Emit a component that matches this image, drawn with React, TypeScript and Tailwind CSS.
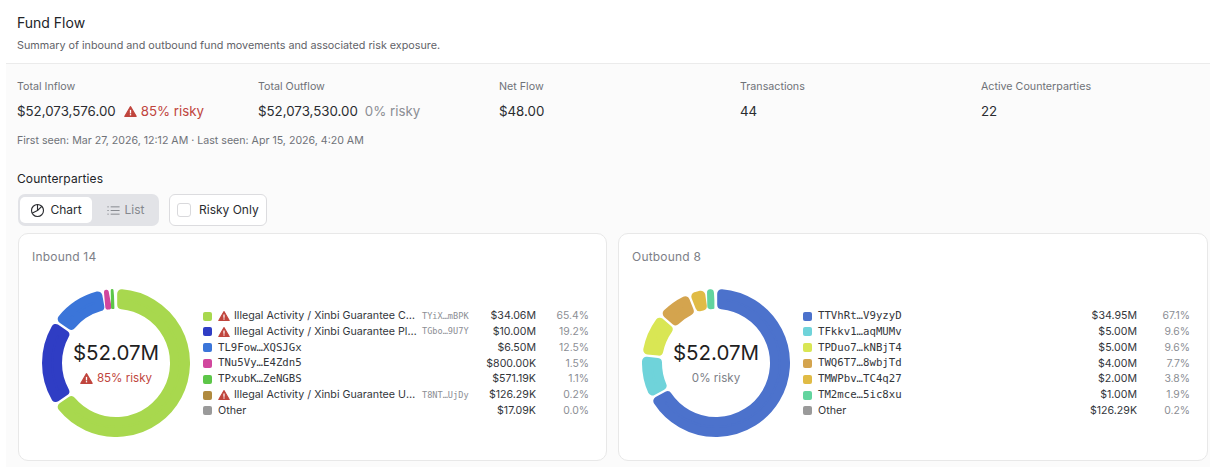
import React from "react";

const SANS = "font-['Inter','Noto_Sans',sans-serif]";
const MONO = "font-['DejaVu_Sans_Mono',monospace]";

function Warn({ size = 12, className = "" }: { size?: number; className?: string }) {
  return (
    <svg width={size} height={size} viewBox="0 0 16 16" className={className}>
      <path d="M8 2 L15 14 H1 Z" fill="#c0453d" stroke="#c0453d" strokeWidth="1.4" strokeLinejoin="round" />
      <rect x="7.2" y="6" width="1.6" height="4.4" fill="#fff" />
      <rect x="7.2" y="11.2" width="1.6" height="1.6" fill="#fff" />
    </svg>
  );
}

type Seg = { pct: number; color: string };

function arcPath(a0: number, a1: number, cx: number, cy: number, ri: number, ro: number, s: number, gap: number) {
  const rIn = ri + s / 2;
  const rOut = ro - s / 2;
  const pt = (r: number, a: number) => {
    const t = ((a - 90) * Math.PI) / 180;
    return `${(cx + r * Math.cos(t)).toFixed(2)} ${(cy + r * Math.sin(t)).toFixed(2)}`;
  };
  const ins = (r: number) => (((gap / 2 + s / 2) / r) * 180) / Math.PI;
  const large = a1 - a0 > 180 ? 1 : 0;
  return `M${pt(rOut, a0 + ins(rOut))} A${rOut} ${rOut} 0 ${large} 1 ${pt(rOut, a1 - ins(rOut))} L${pt(rIn, a1 - ins(rIn))} A${rIn} ${rIn} 0 ${large} 0 ${pt(rIn, a0 + ins(rIn))} Z`;
}

function Donut({ segs, risky }: { segs: Seg[]; risky: boolean }) {
  let acc = 0;
  return (
    <div className="relative w-[148px] h-[148px] shrink-0">
      <svg width="148" height="148" viewBox="0 0 148 148">
        {segs.map((g, i) => {
          const a0 = (acc / 100) * 360;
          acc += g.pct;
          const a1 = (acc / 100) * 360;
          const w = ((a1 - a0) * Math.PI * 74) / 180;
          const s = Math.max(0.4, Math.min(9, w - 2.4));
          return (
            <path
              key={i}
              d={arcPath(a0, a1, 74, 74, 54, 74, s, 2.4)}
              fill={g.color}
              stroke={g.color}
              strokeWidth={s}
              strokeLinejoin="round"
            />
          );
        })}
      </svg>
      <div className="absolute inset-0 flex flex-col items-center justify-center">
        <div className="text-[20.5px] leading-[28px] text-[#1f1f1f]">$52.07M</div>
        {risky ? (
          <div className="flex items-center gap-[4px] text-[11.6px] leading-[18px] text-[#c0453d] mt-[2px]">
            <Warn size={13} />
            85% risky
          </div>
        ) : (
          <div className="text-[11.6px] leading-[18px] text-[#7d8087] mt-[2px]">0% risky</div>
        )}
      </div>
    </div>
  );
}

type Row = { color: string; name: string; mono: boolean; risk?: boolean; addr?: string; amt: string; pct: string };

function Legend({ rows }: { rows: Row[] }) {
  return (
    <div className="flex-1 min-w-0 flex flex-col pt-[1px]">
      {rows.map((r) => (
        <div key={r.color} className="flex items-center h-[15.8px] text-[10.7px]">
          <span className="w-[9px] h-[9px] rounded-[2px] shrink-0" style={{ backgroundColor: r.color }} />
          <div className="flex items-center flex-1 min-w-0 ml-[6px]">
            {r.risk && <Warn size={12} className="shrink-0 mr-[4px]" />}
            {r.risk ? (
              <>
                <span className="w-[185px] shrink-0 truncate text-[#33363b]">{r.name}</span>
                <span className={`ml-[3px] ${MONO} text-[8.6px] text-[#8b8e94]`}>{r.addr}</span>
              </>
            ) : (
              <span className={r.mono ? `${MONO} text-[10.7px] text-[#33363b]` : "text-[#33363b]"}>{r.name}</span>
            )}
          </div>
          <span className="w-[60px] text-right text-[10.6px] text-[#33363b]">{r.amt}</span>
          <span className="w-[53px] text-right text-[10.4px] text-[#8b8e94]">{r.pct}</span>
        </div>
      ))}
    </div>
  );
}

function Card({ title, segs, rows, risky }: { title: string; segs: Seg[]; rows: Row[]; risky: boolean }) {
  return (
    <div className="rounded-[10px] border border-[#e8e8e8] bg-white h-[228px] pl-[13px] pr-[17px] pt-[15px]">
      <div className="text-[12px] leading-[16px] text-[#7d8087] tracking-[0.2px]">{title}</div>
      <div className="flex items-center mt-[24px] ml-[10px] gap-[13px]">
        <Donut segs={segs} risky={risky} />
        <Legend rows={rows} />
      </div>
    </div>
  );
}

function Stat({ label, children }: { label: string; children: React.ReactNode }) {
  return (
    <div>
      <div className="text-[10.7px] leading-[16px] text-[#6f7278]">{label}</div>
      <div className="flex items-center text-[13.3px] leading-[20px] text-[#2a2c30] mt-[6px] whitespace-nowrap">{children}</div>
    </div>
  );
}

const inSegs: Seg[] = [
  { pct: 65.4, color: "#a8d84e" },
  { pct: 19.2, color: "#2f3dc4" },
  { pct: 12.5, color: "#3b75d9" },
  { pct: 1.5, color: "#d1479e" },
  { pct: 1.1, color: "#5dc648" },
  { pct: 0.3, color: "#ffffff" },
];
const outSegs: Seg[] = [
  { pct: 67.1, color: "#4c72cc" },
  { pct: 9.6, color: "#6fd3da" },
  { pct: 9.6, color: "#d9e654" },
  { pct: 7.7, color: "#d4a44e" },
  { pct: 3.8, color: "#e0bb45" },
  { pct: 1.9, color: "#62d49e" },
  { pct: 0.3, color: "#ffffff" },
];
const inRows: Row[] = [
  { color: "#a8d84e", name: "Illegal Activity / Xinbi Guarantee Customer", mono: false, risk: true, addr: "TYiX…mBPK", amt: "$34.06M", pct: "65.4%" },
  { color: "#2f3dc4", name: "Illegal Activity / Xinbi Guarantee Platform", mono: false, risk: true, addr: "TGbo…9U7Y", amt: "$10.00M", pct: "19.2%" },
  { color: "#3b75d9", name: "TL9Fow…XQSJGx", mono: true, amt: "$6.50M", pct: "12.5%" },
  { color: "#d1479e", name: "TNu5Vy…E4Zdn5", mono: true, amt: "$800.00K", pct: "1.5%" },
  { color: "#5dc648", name: "TPxubK…ZeNGBS", mono: true, amt: "$571.19K", pct: "1.1%" },
  { color: "#b08a3e", name: "Illegal Activity / Xinbi Guarantee Unknown", mono: false, risk: true, addr: "T8NT…UjDy", amt: "$126.29K", pct: "0.2%" },
  { color: "#9a9a9a", name: "Other", mono: false, amt: "$17.09K", pct: "0.0%" },
];
const outRows: Row[] = [
  { color: "#4c72cc", name: "TTVhRt…V9yzyD", mono: true, amt: "$34.95M", pct: "67.1%" },
  { color: "#6fd3da", name: "TFkkv1…aqMUMv", mono: true, amt: "$5.00M", pct: "9.6%" },
  { color: "#d9e654", name: "TPDuo7…kNBjT4", mono: true, amt: "$5.00M", pct: "9.6%" },
  { color: "#d4a44e", name: "TWQ6T7…8wbjTd", mono: true, amt: "$4.00M", pct: "7.7%" },
  { color: "#e0bb45", name: "TMWPbv…TC4q27", mono: true, amt: "$2.00M", pct: "3.8%" },
  { color: "#62d49e", name: "TM2mce…5ic8xu", mono: true, amt: "$1.00M", pct: "1.9%" },
  { color: "#9a9a9a", name: "Other", mono: false, amt: "$126.29K", pct: "0.2%" },
];

export default function App() {
  return (
    <div className={`w-[1220px] h-[476px] overflow-hidden bg-white pl-[6px] pr-[10px] ${SANS}`}>
      <div className="h-[64px] border-b border-[#ebebeb] pl-[11px] pt-[13px]">
        <div className="text-[14px] leading-[20px] text-[#222428]">Fund Flow</div>
        <div className="text-[10.77px] leading-[16px] text-[#5f6268] mt-[5px]">Summary of inbound and outbound fund movements and associated risk exposure.</div>
      </div>
      <div className="h-[403px] bg-[#fbfbfb] pl-[11px] pt-[15px]">
        <div className="grid grid-cols-[241px_241px_241px_241px_1fr]">
          <Stat label="Total Inflow">
            $52,073,576.00
            <span className="flex items-center text-[#c0453d] ml-[8px]">
              <Warn size={13} className="mr-[4px]" />
              85% risky
            </span>
          </Stat>
          <Stat label="Total Outflow">
            $52,073,530.00<span className="text-[#8b8e94] ml-[7px]">0% risky</span>
          </Stat>
          <Stat label="Net Flow">$48.00</Stat>
          <Stat label="Transactions">44</Stat>
          <Stat label="Active Counterparties">22</Stat>
        </div>
        <div className="text-[10.62px] leading-[16px] text-[#6f7278] mt-[12px]">First seen: Mar 27, 2026, 12:12 AM · Last seen: Apr 15, 2026, 4:20 AM</div>
        <div className="text-[12px] leading-[16px] text-[#222428] mt-[22px] tracking-[0.1px]">Counterparties</div>
        <div className="flex items-center gap-[10px] mt-[7px] ml-[1px]">
          <div className="flex h-[32px] w-[141px] rounded-[7px] bg-[#e2e3e7] py-[3px] pl-[2px] pr-[3px]">
            <div className="w-[72px] rounded-[5px] bg-white flex items-center justify-center gap-[5px] text-[12px] text-[#2a2c30]">
              <svg width="15" height="15" viewBox="0 0 16 16" fill="none" stroke="#2a2c30" strokeWidth="1.2" strokeLinecap="round" strokeLinejoin="round">
                <circle cx="8" cy="8" r="6.4" />
                <path d="M2.6 10.6 L8 8 L12.6 3.6 M8 8 L8 1.8" />
              </svg>
              Chart
            </div>
            <div className="flex-1 flex items-center justify-center gap-[5px] pl-[3px] text-[12px] text-[#85888e]">
              <svg width="13" height="13" viewBox="0 0 16 16" fill="none" stroke="#85888e" strokeWidth="1.2" strokeLinecap="round">
                <path d="M5 3.5H15M5 8H15M5 12.5H15M1 3.5H1.6M1 8H1.6M1 12.5H1.6" />
              </svg>
              List
            </div>
          </div>
          <div className="flex items-center h-[32px] w-[98px] rounded-[6px] border border-[#dcdcdf] bg-white pl-[7px] text-[12px] text-[#2a2c30]">
            <span className="w-[14px] h-[14px] rounded-[3px] border border-[#d9d9dc] bg-white mr-[8px]" />
            Risky Only
          </div>
        </div>
        <div className="grid grid-cols-[589px_590px] gap-[11px] mt-[7px] ml-[1px]">
          <Card title="Inbound 14" segs={inSegs} rows={inRows} risky />
          <Card title="Outbound 8" segs={outSegs} rows={outRows} risky={false} />
        </div>
      </div>
    </div>
  );
}
